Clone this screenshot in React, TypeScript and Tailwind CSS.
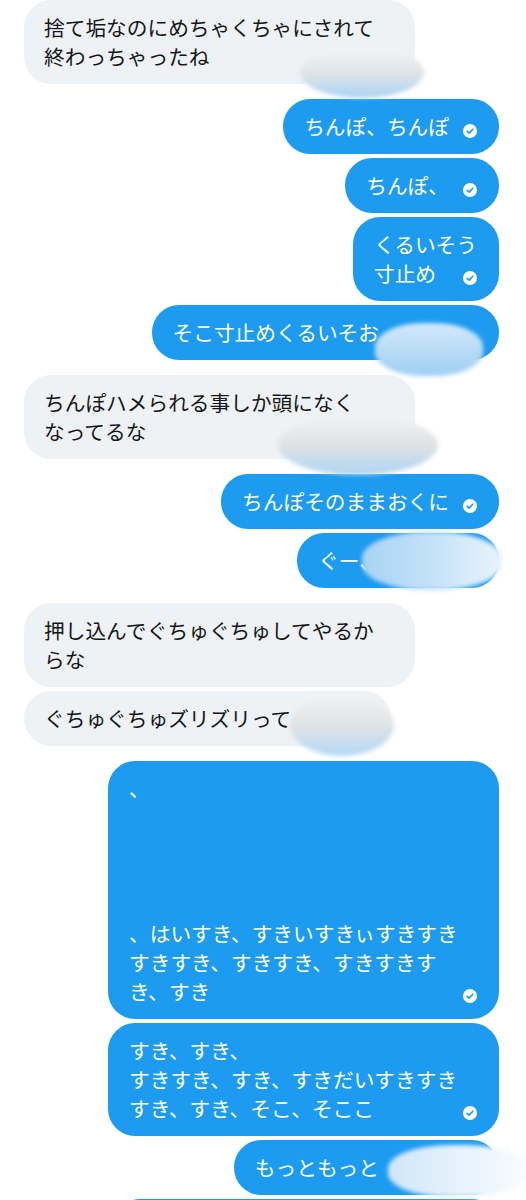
import React from "react";

const font = "font-['Noto_Sans_CJK_JP','Noto_Sans',sans-serif]";

function Check() {
  return (
    <svg width="14" height="14" viewBox="0 0 14 14">
      <circle cx="7" cy="7" r="7" fill="#ffffff" />
      <path
        d="M4.2 7.3l1.9 1.8 3.7-3.9"
        stroke="#1d9bf0"
        strokeWidth="1.6"
        fill="none"
        strokeLinecap="round"
        strokeLinejoin="round"
      />
    </svg>
  );
}

type BubbleProps = {
  text: string;
  wide?: boolean;
  spacer?: number;
  check?: boolean;
};

function Sent({ text, wide, spacer = 28, check = true }: BubbleProps) {
  return (
    <div
      className={`relative self-end rounded-[27px] bg-[#1d9bf0] text-white pl-[21px] pr-[22px] py-[13px] leading-[29px] text-[20.7px] whitespace-pre-wrap ${
        wide ? "w-[391px]" : ""
      }`}
    >
      {text}
      <span className="inline-block" style={{ width: spacer }} />
      {check && (
        <span className="absolute right-[22px] bottom-[16px] flex">
          <Check />
        </span>
      )}
    </div>
  );
}

function Received({ text, wide, spacer = 0 }: BubbleProps) {
  return (
    <div
      className={`self-start rounded-[27px] bg-[#eff2f4] text-[#14171a] px-[20px] py-[13px] leading-[29px] text-[20.7px] whitespace-pre-wrap ${
        wide ? "w-[391px]" : ""
      }`}
    >
      {text}
      {spacer > 0 && <span className="inline-block" style={{ width: spacer }} />}
    </div>
  );
}

function Group({ children }: { children: React.ReactNode }) {
  return <div className="flex flex-col gap-[4px]">{children}</div>;
}

export default function App() {
  return (
    <div className={`relative w-[526px] h-[1200px] overflow-hidden bg-white ${font}`}>
      <div className="flex flex-col gap-[15px] pl-[24px] pr-[27px]">
        <Group>
          <Received wide text={"捨て垢なのにめちゃくちゃにされて\n終わっちゃったね"} />
        </Group>
        <Group>
          <Sent text="ちんぽ、ちんぽ" />
          <Sent text="ちんぽ、" />
          <Sent text={"くるいそう\n寸止め"} />
          <Sent text="そこ寸止めくるいそお" spacer={98} check={false} />
        </Group>
        <Group>
          <Received wide text={"ちんぽハメられる事しか頭になく\nなってるな"} />
        </Group>
        <Group>
          <Sent text="ちんぽそのままおくに" />
          <Sent text="ぐー、" spacer={97} check={false} />
        </Group>
        <Group>
          <Received wide text={"押し込んでぐちゅぐちゅしてやるか\nらな"} />
          <Received text="ぐちゅぐちゅズリズリって" spacer={80} />
        </Group>
        <Group>
          <Sent
            wide
            text={"、\n\n\n\n\n、はいすき、すきいすきぃすきすき\nすきすき、すきすき、すきすきす\nき、すき"}
          />
          <Sent
            wide
            text={"すき、すき、\nすきすき、すき、すきだいすきすき\nすき、すき、そこ、そここ"}
          />
          <Sent text="もっともっと" spacer={98} check={false} />
          <div className="self-end w-[386px] h-[60px] rounded-[27px] bg-[#1d9bf0]" />
        </Group>
      </div>

      {/* redaction smudges */}
      <div className="absolute left-[300px] top-[47px] w-[124px] h-[51px] rounded-[50%] blur-[2px] bg-linear-to-b from-[#f3f4f4] via-[#e2e4e6] to-[#a9d3f3]" />
      <div className="absolute left-[375px] top-[323px] w-[108px] h-[53px] rounded-[45%] blur-[2px] bg-linear-to-b from-[#d4e9f9] via-[#b9dcf6] to-[#9fcff3]" />
      <div className="absolute left-[278px] top-[415px] w-[160px] h-[60px] rounded-[50%] blur-[2px] bg-linear-to-b from-[#f2f3f3] via-[#e0e2e4] to-[#add5f3]" />
      <div className="absolute left-[362px] top-[532px] w-[140px] h-[58px] rounded-[45%] blur-[2px] bg-linear-to-r from-[#a9d3f4] via-[#c4e2f8] to-[#e9f4fc]" />
      <div className="absolute left-[290px] top-[694px] w-[104px] h-[62px] rounded-[50%] blur-[2px] bg-linear-to-b from-[#f1f2f3] via-[#e1e3e5] to-[#b3d8f5]" />
      <div className="absolute left-[388px] top-[1145px] w-[140px] h-[52px] rounded-[45%] blur-[2px] bg-linear-to-r from-[#cfe7f9] via-[#e6f2fc] to-[#fafcfe]" />
    </div>
  );
}
